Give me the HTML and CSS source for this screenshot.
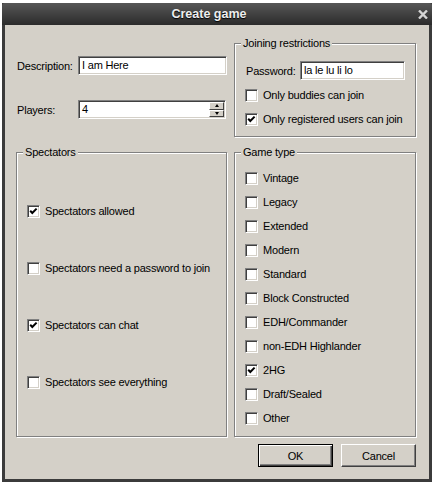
FILE: index.html
```html
<!DOCTYPE html>
<html>
<head>
<meta charset="utf-8">
<title>Create game</title>
<link rel="stylesheet" href="styles.css">
</head>
<body>
<div class="window">
  <div class="titlebar">
    <span class="title">Create game</span>
    <span class="close"><svg width="10" height="9" viewBox="0 0 10 9"><path d="M1 0.5 L9 8.5 M9 0.5 L1 8.5" stroke="#d6d6d6" stroke-width="2.4" fill="none"/></svg></span>
  </div>
  <div class="content">
    <div class="grid">
      <div class="general">
        <div class="field-row"><span class="lbl">Description:</span><div class="input desc">I am Here</div></div>
        <div class="field-row players"><span class="lbl">Players:</span><div class="input spin"><span class="val">4</span><span class="spin-btns"><span class="sb up"></span><span class="sb down"></span></span></div></div>
      </div>
      <div class="group joining">
        <div class="group-title">Joining restrictions</div>
        <div class="field-row pw"><span class="lbl pwl">Password:</span><div class="input pwi">la le lu li lo</div></div>
        <div class="check first"><span class="cb"></span><span>Only buddies can join</span></div>
        <div class="check"><span class="cb checked"><svg width="9" height="9" viewBox="0 0 9 9"><path d="M1.2 3.8 L3.3 6 L7.6 1.6" stroke="#000" stroke-width="2" fill="none"/></svg></span><span>Only registered users can join</span></div>
      </div>
      <div class="group spect">
        <div class="group-title">Spectators</div>
        <div class="check"><span class="cb checked"><svg width="9" height="9" viewBox="0 0 9 9"><path d="M1.2 3.8 L3.3 6 L7.6 1.6" stroke="#000" stroke-width="2" fill="none"/></svg></span><span>Spectators allowed</span></div>
        <div class="check"><span class="cb"></span><span>Spectators need a password to join</span></div>
        <div class="check"><span class="cb checked"><svg width="9" height="9" viewBox="0 0 9 9"><path d="M1.2 3.8 L3.3 6 L7.6 1.6" stroke="#000" stroke-width="2" fill="none"/></svg></span><span>Spectators can chat</span></div>
        <div class="check"><span class="cb"></span><span>Spectators see everything</span></div>
      </div>
      <div class="group gametype">
        <div class="group-title">Game type</div>
        <div class="check"><span class="cb"></span><span>Vintage</span></div>
        <div class="check"><span class="cb"></span><span>Legacy</span></div>
        <div class="check"><span class="cb"></span><span>Extended</span></div>
        <div class="check"><span class="cb"></span><span>Modern</span></div>
        <div class="check"><span class="cb"></span><span>Standard</span></div>
        <div class="check"><span class="cb"></span><span>Block Constructed</span></div>
        <div class="check"><span class="cb"></span><span>EDH/Commander</span></div>
        <div class="check"><span class="cb"></span><span>non-EDH Highlander</span></div>
        <div class="check"><span class="cb checked"><svg width="9" height="9" viewBox="0 0 9 9"><path d="M1.2 3.8 L3.3 6 L7.6 1.6" stroke="#000" stroke-width="2" fill="none"/></svg></span><span>2HG</span></div>
        <div class="check"><span class="cb"></span><span>Draft/Sealed</span></div>
        <div class="check"><span class="cb"></span><span>Other</span></div>
      </div>
    </div>
    <div class="buttons">
      <div class="btn default">OK</div>
      <div class="btn">Cancel</div>
    </div>
  </div>
</div>
</body>
</html>
```
FILE: styles.css
```css
* { box-sizing: border-box; }
html, body { margin: 0; padding: 0; background: #fff; }
body {
  font-family: "Liberation Sans", Arial, sans-serif;
  font-size: 11px;
  letter-spacing: -0.2px;
  color: #000;
}
.window {
  margin: 3px 0 0 2px;
  width: 430px;
  height: 479px;
  background: #3b3b3b;
  padding: 0 3px 3px;
  display: flex;
  flex-direction: column;
}
.titlebar {
  height: 22px;
  margin: 0 -3px;
  background: linear-gradient(#575757, #2b2b2b);
  border-radius: 3px 3px 0 0;
  display: flex;
  align-items: center;
}
.title {
  flex: 1;
  text-align: center;
  font: bold 12.5px "Liberation Sans", Arial, sans-serif;
  letter-spacing: 0;
  color: #eeeeee;
  text-shadow: 0 1px 1px #000;
}
.close { width: 10px; margin: 0 4px 0 2px; display: flex; }
.content {
  flex: 1;
  background: #d4d0c8;
  padding: 18px 13px 0 11px;
}
.grid {
  display: grid;
  grid-template-columns: 211px 182px;
  grid-template-rows: 94px 285px;
  column-gap: 7px;
  row-gap: 15px;
}
.general { padding: 13px 0 0 1px; }
.field-row { display: flex; align-items: center; height: 19px; }
.lbl { width: 61px; flex: none; }
.players { margin-top: 25px; }
.input {
  height: 19px;
  background: #fff;
  border: 1px solid;
  border-color: #808080 #fff #fff #808080;
  box-shadow: inset 1px 1px #404040, inset -1px -1px #d4d0c8;
  padding: 0 2px 0 3px;
  line-height: 17px;
  white-space: nowrap;
}
.desc { width: 149px; }
.spin { width: 148px; display: flex; padding-right: 1px; }
.val { flex: 1; }
.spin-btns {
  width: 15px;
  display: flex;
  flex-direction: column;
  padding: 1px 0;
}
.sb {
  flex: 1;
  background: #d4d0c8;
  border: 1px solid;
  border-color: #fff #404040 #404040 #fff;
  display: flex;
  align-items: center;
  justify-content: center;
}
.sb::after {
  content: "";
  width: 0;
  height: 0;
  border-left: 2.5px solid transparent;
  border-right: 2.5px solid transparent;
}
.up::after { border-bottom: 3px solid #000; }
.down::after { border-top: 3px solid #000; }

.group {
  border: 1px solid #808080;
  box-shadow: inset 1px 1px #fff, 1px 1px #fff;
  display: flex;
  flex-direction: column;
  padding: 0 10px;
}
.group-title {
  align-self: flex-start;
  margin: -7px 0 0 -4px;
  padding: 0 2px;
  background: #d4d0c8;
  line-height: 13px;
}
.pw { margin-top: 11px; padding-left: 1px; }
.pwl { width: 54px; }
.pwi { width: 106px; }
.check {
  display: flex;
  align-items: center;
  gap: 5px;
  height: 16px;
  white-space: nowrap;
}
.joining .check { margin-top: 8px; }
.joining .check.first { margin-top: 7px; }
.spect .check { margin-top: 41px; }
.spect .check:nth-child(2) { margin-top: 44px; }
.gametype .check { margin-top: 8px; }
.gametype .check:nth-child(2) { margin-top: 11px; }
.cb {
  width: 13px;
  height: 13px;
  flex: none;
  background: #fff;
  border: 1px solid;
  border-color: #808080 #fff #fff #808080;
  box-shadow: inset 1px 1px #404040, inset -1px -1px #d4d0c8;
  display: flex;
  align-items: center;
  justify-content: center;
}
.buttons {
  width: 400px;
  display: flex;
  justify-content: flex-end;
  gap: 8px;
  margin-top: 7px;
}
.btn {
  width: 75px;
  height: 23px;
  display: flex;
  align-items: center;
  justify-content: center;
  background: #d4d0c8;
  border: 1px solid;
  border-color: #fff #404040 #404040 #fff;
  box-shadow: inset -1px -1px #808080;
}
.btn.default {
  border-color: #000;
  box-shadow: inset 1px 1px #fff, inset -1px -1px #404040, inset -2px -2px #808080;
}
```
